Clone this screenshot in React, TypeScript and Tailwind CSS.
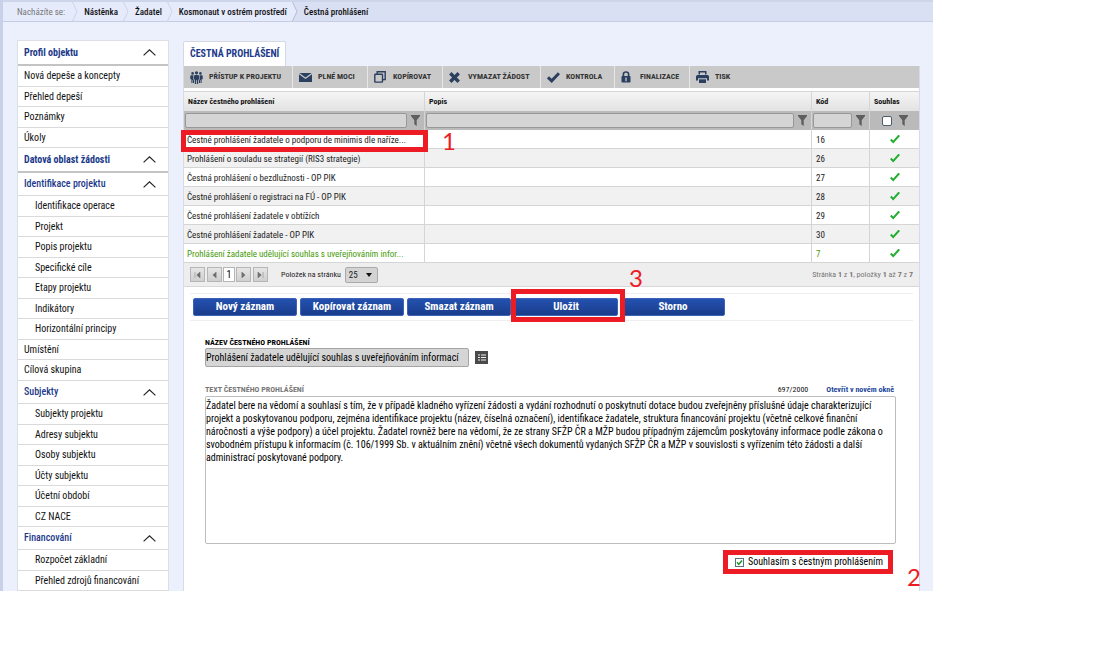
import { useState } from 'react';
import clsx from 'clsx';

const crumbs = ['Nástěnka', 'Žadatel', 'Kosmonaut v ostrém prostředí'];

type MenuItem = { label: string; sub?: boolean };
type MenuGroup = { title: string; main?: boolean; items: MenuItem[] };

const menu: MenuGroup[] = [
    {
        title: 'Profil objektu',
        main: true,
        items: [{ label: 'Nová depeše a koncepty' }, { label: 'Přehled depeší' }, { label: 'Poznámky' }, { label: 'Úkoly' }],
    },
    { title: 'Datová oblast žádosti', main: true, items: [] },
    {
        title: 'Identifikace projektu',
        items: [
            { label: 'Identifikace operace', sub: true },
            { label: 'Projekt', sub: true },
            { label: 'Popis projektu', sub: true },
            { label: 'Specifické cíle', sub: true },
            { label: 'Etapy projektu', sub: true },
            { label: 'Indikátory', sub: true },
            { label: 'Horizontální principy', sub: true },
            { label: 'Umístění' },
            { label: 'Cílová skupina' },
        ],
    },
    {
        title: 'Subjekty',
        items: [
            { label: 'Subjekty projektu', sub: true },
            { label: 'Adresy subjektu', sub: true },
            { label: 'Osoby subjektu', sub: true },
            { label: 'Účty subjektu', sub: true },
            { label: 'Účetní období', sub: true },
            { label: 'CZ NACE', sub: true },
        ],
    },
    {
        title: 'Financování',
        items: [
            { label: 'Rozpočet základní', sub: true },
            { label: 'Přehled zdrojů financování', sub: true },
        ],
    },
];

const rows = [
    { name: 'Čestné prohlášení žadatele o podporu de minimis dle naříze...', code: 16 },
    { name: 'Prohlášení o souladu se strategií (RIS3 strategie)', code: 26 },
    { name: 'Čestná prohlášení o bezdlužnosti - OP PIK', code: 27 },
    { name: 'Čestné prohlášení o registraci na FÚ - OP PIK', code: 28 },
    { name: 'Čestné prohlášení žadatele v obtížích', code: 29 },
    { name: 'Čestné prohlášení žadatele - OP PIK', code: 30 },
    { name: 'Prohlášení žadatele udělující souhlas s uveřejňováním infor...', code: 7 },
];

const declaration =
    'Žadatel bere na vědomí a souhlasí s tím, že v případě kladného vyřízení žádosti a vydání rozhodnutí o poskytnutí dotace budou zveřejněny příslušné údaje charakterizující projekt a poskytovanou podporu, zejména identifikace projektu (název, číselná označení), identifikace žadatele, struktura financování projektu (včetně celkové finanční náročnosti a výše podpory) a účel projektu. Žadatel rovněž bere na vědomí, že ze strany SFŽP ČR a MŽP budou případným zájemcům poskytovány informace podle zákona o svobodném přístupu k informacím (č. 106/1999 Sb. v aktuálním znění) včetně všech dokumentů vydaných SFŽP ČR a MŽP v souvislosti s vyřízením této žádosti a další administrací poskytované podpory.';

const PeopleIcon = () => (
    <svg width="13" height="13" viewBox="0 0 13 13" fill="#2b3f5f">
        <circle cx="6.5" cy="1.8" r="1.6" />
        <circle cx="2.6" cy="2.4" r="1.3" />
        <circle cx="10.4" cy="2.4" r="1.3" />
        <path d="M4.6 3.9h3.8l.6 1v3.6H8.2V13H6.9V9.300h-.8V13H4.800V8.500H4V4.900z" />
        <path d="M.9 4.200h2.500v4.200l.6.600v3H2.900V9h-.5v3h-1V8.200H.3V4.900zM12.100 4.200H9.600v4.200L9 9v3h1.100V9h.5v3h1V8.200h1.100V4.900z" />
    </svg>
);

const MailIcon = () => (
    <svg width="13" height="9" viewBox="0 0 13 9" fill="#2b3f5f">
        <path d="M.4 0h12.200L6.500 4.600z" />
        <path d="M0 1.200l6.500 4.900L13 1.200V9H0z" />
    </svg>
);

const CopyIcon = () => (
    <svg width="12" height="12" viewBox="0 0 12 12" fill="none" stroke="#2b3f5f" strokeWidth="1.4">
        <rect x=".8" y="3.2" width="7.700" height="7.900" rx=".6" />
        <path d="M3.200 3V.8h8v7.800H8.800" />
    </svg>
);

const CrossIcon = () => (
    <svg width="11" height="11" viewBox="0 0 11 11" fill="none" stroke="#2b3f5f" strokeWidth="3.4">
        <path d="M1.300 1.300l8.400 8.400M9.700 1.300L1.300 9.700" />
    </svg>
);

const CheckIcon = () => (
    <svg width="13" height="11" viewBox="0 0 13 11" fill="none" stroke="#2b3f5f" strokeWidth="3">
        <path d="M1 5.300l3.700 3.600L12 1.200" />
    </svg>
);

const LockIcon = () => (
    <svg width="10" height="12" viewBox="0 0 10 12">
        <path d="M2.400 5.500V3.300a2.600 2.300 0 0 1 5.200 0v2.200" fill="none" stroke="#2b3f5f" strokeWidth="1.700" />
        <rect x=".5" y="5" width="9" height="6.600" rx=".8" fill="#2b3f5f" />
        <path d="M5 6.600v3.600" stroke="#d4d8df" strokeWidth="1.200" />
    </svg>
);

const PrintIcon = () => (
    <svg width="13" height="12" viewBox="0 0 13 12" fill="#2b3f5f">
        <path d="M2.500 0h8v3.500H9V1.400H4v2.100H2.500z" />
        <path d="M1.200 3.900h10.600L13 5v4.500h-2V7.200H2v2.300H0V5z" />
        <path d="M3 8.300h7V12H3z" />
    </svg>
);

const toolbar = [
    { label: 'PŘÍSTUP K PROJEKTU', Icon: PeopleIcon, width: 'w-[109px]' },
    { label: 'PLNÉ MOCI', Icon: MailIcon, width: 'w-[75px]' },
    { label: 'KOPÍROVAT', Icon: CopyIcon, width: 'w-[75px]' },
    { label: 'VYMAZAT ŽÁDOST', Icon: CrossIcon, width: 'w-[98px]' },
    { label: 'KONTROLA', Icon: CheckIcon, width: 'w-[74px]' },
    { label: 'FINALIZACE', Icon: LockIcon, width: 'w-[75px]' },
    { label: 'TISK', Icon: PrintIcon, width: 'w-[60px]' },
];

const FilterIcon = () => (
    <svg width="9" height="11" viewBox="0 0 9 11" fill="#5e5e5e" className="shrink-0">
        <path d="M0 0h9v1L5.700 5.200V11L3.300 9.300V5.200L0 1z" />
    </svg>
);

const Chevron = () => (
    <svg width="13" height="7" viewBox="0 0 13 7" fill="none" stroke="#222" strokeWidth="1.200">
        <path d="M.6 6.400l5.900-5.500 5.900 5.500" />
    </svg>
);

const CrumbArrow = ({ last }: { last?: boolean }) => (
    <svg width="6" height="19" viewBox="0 0 6 19" className="shrink-0">
        {last && <path d="M0 0h6v19H0l5-9.500z" fill="#d9e0f4" />}
        <path d="M.5 0l4.500 9.500L.5 19" fill="none" stroke={last ? '#b4bdd6' : '#ccd3e6'} />
    </svg>
);

const GreenTick = () => (
    <svg width="10" height="9" viewBox="0 0 10 9" className="mx-auto" fill="none" stroke="#1fae2b" strokeWidth="2">
        <path d="M.8 4.500l2.400 2.600L9.200.3" />
    </svg>
);

const pagerShapes = [
    { label: 'První', d: 'M1 0v7M7 0L3 3.500 7 7z' },
    { label: 'Předchozí', d: 'M6 0L2 3.500 6 7z' },
    { label: 'Další', d: 'M2 0l4 3.500L2 7z' },
    { label: 'Poslední', d: 'M7 0v7M1 0l4 3.500L1 7z' },
];

const PagerButton = ({ index }: { index: number }) => (
    <button
        type="button"
        aria-label={pagerShapes[index].label}
        className="flex h-[15px] w-[15px] items-center justify-center border border-[#b5b5b5] bg-linear-to-b from-[#e6e6e6] to-[#cfcfcf]"
    >
        <svg width="7" height="6" viewBox="0 0 8 7" fill="#6e6e6e" stroke="#6e6e6e" strokeWidth=".5">
            <path d={pagerShapes[index].d} />
        </svg>
    </button>
);

const ActionButton = ({ label }: { label: string }) => (
    <button
        type="button"
        className="block h-[18px] w-[104px] rounded-[2px] border border-[#3c63b8] bg-linear-to-b from-[#2451b0] to-[#1a3d8c] text-[11px] leading-4 font-bold text-white"
    >
        {label}
    </button>
);

const filterInput = 'h-[15px] min-w-0 flex-1 rounded-[2px] border border-[#989898] bg-[#d5d5d5]';

export default function App() {
    const [agree, setAgree] = useState(true);
    const [text, setText] = useState(declaration);

    return (
        <div className="pr-[175px] font-['Roboto_Condensed','Liberation_Sans_Narrow',Roboto,sans-serif] text-[10px] leading-4 text-[#111]">
            <div className="border-l-[3px] border-[#c8d0ea] bg-[#ecf0fd]">
                {/* Breadcrumbs */}
                <nav className="flex h-[22px] items-stretch border-t-2 border-b border-t-[#cdd5ea] border-b-[#c6cde2] bg-[#e6ebfc] text-[9px]">
                    <span className="flex items-center pr-[7px] pl-[14px] text-[#777]">Nacházíte se:</span>
                    {crumbs.map((crumb) => (
                        <div key={crumb} className="flex">
                            <CrumbArrow />
                            <a href="#" className="flex items-center pr-[5px] pl-[6px] font-medium">
                                {crumb}
                            </a>
                        </div>
                    ))}
                    <CrumbArrow last />
                    <span className="flex flex-1 items-center bg-[#d9e0f4] pl-[6px] font-medium">Čestná prohlášení</span>
                </nav>

                <div className="flex gap-[14px] pt-[19px] pr-[13px] pl-[14px]">
                    {/* Side menu */}
                    <aside className="w-[152px] shrink-0 border-x border-[#dcdfe6] bg-white shadow-[0_-1px_0_#dcdfe6]">
                        {menu.map((group) => (
                            <section key={group.title}>
                                <button
                                    type="button"
                                    className={clsx(
                                        'flex w-full items-center justify-between pr-3 pl-[6px] text-left text-[#1c3a8a]',
                                        group.main ? 'h-[25px] border-b-2 border-[#c4c4c4] font-bold' : 'h-[23px] border-b border-[#dadada] font-medium'
                                    )}
                                >
                                    {group.title}
                                    <Chevron />
                                </button>
                                <ul>
                                    {group.items.map((item) => (
                                        <li key={item.label} className="h-[21px] border-b border-[#dadada] even:h-5">
                                            <a href="#" className={clsx('flex h-full items-center', item.sub ? 'pl-[17px]' : 'pl-[6px]')}>
                                                {item.label}
                                            </a>
                                        </li>
                                    ))}
                                </ul>
                            </section>
                        ))}
                    </aside>

                    <main className="flex min-w-0 flex-1 flex-col">
                        <div className="flex">
                            <h1 className="h-[25px] rounded-t-[2px] border border-b-0 border-[#d4d8e2] bg-white px-[6px] text-[10px] leading-6 font-bold text-[#1c3a8a]">
                                ČESTNÁ PROHLÁŠENÍ
                            </h1>
                        </div>

                        <div className="flex-1 border-r border-l border-[#d8dbe3] bg-white">
                            {/* Toolbar */}
                            <div className="mb-[3px] flex h-[22px] bg-[#c9c9c9]">
                                {toolbar.map(({ label, Icon, width }, i) => (
                                    <button
                                        key={label}
                                        type="button"
                                        className={clsx(
                                            'flex items-center gap-[6px] pl-[6px] text-[8px] font-bold whitespace-nowrap text-[#333]',
                                            width,
                                            i < toolbar.length - 1 && 'border-r border-[#e6e6e6]'
                                        )}
                                    >
                                        <span className="w-[13px]">
                                            <Icon />
                                        </span>
                                        {label}
                                    </button>
                                ))}
                            </div>

                            {/* Declarations grid */}
                            <table className="w-full table-fixed border-separate border-spacing-0 text-[#222]">
                                <colgroup>
                                    <col className="w-[241px]" />
                                    <col />
                                    <col className="w-[58px]" />
                                    <col className="w-[49px]" />
                                </colgroup>
                                <thead>
                                    <tr className="h-5 bg-linear-to-b from-[#f6f6f6] to-[#e2e2e2] text-left text-[8px] text-[#111]">
                                        {['Název čestného prohlášení', 'Popis', 'Kód', 'Souhlas'].map((head) => (
                                            <th key={head} className="border-t border-r border-[#d5d5d5] px-1 py-0 font-bold last:border-r-0">
                                                {head}
                                            </th>
                                        ))}
                                    </tr>
                                    <tr className="h-[19px] bg-[#bababa]">
                                        {['Název', 'Popis', 'Kód'].map((field) => (
                                            <td key={field} className="border-r border-[#d5d5d5] p-0">
                                                <div className="flex items-center gap-1 pr-1 pl-px">
                                                    <input type="text" aria-label={`Filtr ${field}`} className={filterInput} />
                                                    <FilterIcon />
                                                </div>
                                            </td>
                                        ))}
                                        <td className="p-0">
                                            <div className="flex items-center justify-center gap-[7px]">
                                                <input
                                                    type="checkbox"
                                                    aria-label="Filtr Souhlas"
                                                    className="h-[10px] w-[10px] appearance-none rounded-[2px] border border-[#4d5d68] bg-white"
                                                />
                                                <FilterIcon />
                                            </div>
                                        </td>
                                    </tr>
                                </thead>
                                <tbody>
                                    {rows.map((row, i) => (
                                        <tr key={row.code} className={clsx('h-[19px] even:bg-[#f1f1f1]', row.code === 7 && 'text-[#469a06]')}>
                                            <td className="relative border-r border-b border-[#d5d5d5] px-[3px] pt-[2px] pb-0 text-[9px] whitespace-nowrap">
                                                {row.name}
                                                {i === 0 && <div className="absolute top-0 -left-[3px] z-10 h-[22px] w-[247px] border-[5px] border-[#ed1c24]" />}
                                            </td>
                                            <td className="relative border-r border-b border-[#d5d5d5] p-0">
                                                {i === 0 && (
                                                    <span className="absolute -top-px left-[17px] font-[Lato,sans-serif] text-[24px] leading-6 text-[#ed1c24]">1</span>
                                                )}
                                            </td>
                                            <td className="border-r border-b border-[#d5d5d5] px-1 pt-[2px] pb-0 text-[9px]">{row.code}</td>
                                            <td className="border-b border-[#d5d5d5] p-0">
                                                <GreenTick />
                                            </td>
                                        </tr>
                                    ))}
                                </tbody>
                            </table>

                            {/* Pager */}
                            <div className="flex h-6 items-center justify-between border-b border-[#d8d8d8] bg-[#eee] px-[6px] text-[8px] text-[#777]">
                                <div className="flex items-center">
                                    <div className="mr-px flex gap-[2px]">
                                        <PagerButton index={0} />
                                        <PagerButton index={1} />
                                    </div>
                                    <span className="h-[15px] w-3 border border-[#b5b5b5] bg-white text-center text-[10px] leading-[13px] text-black">1</span>
                                    <div className="ml-px flex gap-[2px]">
                                        <PagerButton index={2} />
                                        <PagerButton index={3} />
                                    </div>
                                    <label htmlFor="page-size" className="pr-1 pl-[13px] text-[#222]">
                                        Položek na stránku
                                    </label>
                                    <div className="relative flex">
                                        <select
                                            id="page-size"
                                            className="h-4 w-[33px] appearance-none rounded-[2px] border border-[#aaa] bg-[#d3d3d3] pl-[3px] text-[9px] leading-[14px] text-[#222]"
                                        >
                                            <option>25</option>
                                        </select>
                                        <svg width="6" height="4" viewBox="0 0 6 4" className="pointer-events-none absolute top-[6px] right-[6px]">
                                            <path d="M0 0h6L3 4z" fill="#111" />
                                        </svg>
                                    </div>
                                </div>
                                <span>
                                    Stránka <b>1</b> z <b>1</b>, položky <b>1</b> až <b>7</b> z <b>7</b>
                                </span>
                            </div>

                            {/* Record actions */}
                            <div className="mx-[6px] mt-[6px] flex gap-[3px] border-y border-[#eee] px-[3px] py-1">
                                <ActionButton label="Nový záznam" />
                                <ActionButton label="Kopírovat záznam" />
                                <ActionButton label="Smazat záznam" />
                                <div className="relative">
                                    <ActionButton label="Uložit" />
                                    <div className="absolute -top-[9px] -left-[3px] z-10 h-[33px] w-[114px] border-[5px] border-[#ed1c24]" />
                                    <span className="absolute -top-8 left-[115px] font-[Lato,sans-serif] text-[24px] leading-6 text-[#ed1c24]">3</span>
                                </div>
                                <ActionButton label="Storno" />
                            </div>

                            {/* Record form */}
                            <form className="mr-[23px] ml-[21px] pt-[17px]">
                                <label htmlFor="name" className="block text-[8px] leading-[10px] font-bold text-black">
                                    NÁZEV ČESTNÉHO PROHLÁŠENÍ
                                </label>
                                <div className="flex items-center gap-[6px]">
                                    <input
                                        id="name"
                                        readOnly
                                        defaultValue="Prohlášení žadatele udělující souhlas s uveřejňováním informací"
                                        className="h-[19px] w-[264px] rounded-[2px] border border-[#a5a5a5] bg-[#d5d5d5] text-black"
                                    />
                                    <button type="button" aria-label="Vybrat" className="bg-[#4a4a4a]">
                                        <svg width="13" height="13" viewBox="0 0 13 13" stroke="#eee" strokeWidth="1.200">
                                            <path d="M3 4h2M3 6.500h2M3 9h2M6 4h5M6 6.500h5M6 9h5" />
                                        </svg>
                                    </button>
                                </div>

                                <div className="mt-[17px] flex items-end text-[8px] leading-[12px]">
                                    <label htmlFor="declaration" className="flex-1 font-bold text-[#777]">
                                        TEXT ČESTNÉHO PROHLÁŠENÍ
                                    </label>
                                    <span className="mr-[18px]">697/2000</span>
                                    <a href="#" className="mr-[2px] font-bold text-[#1f4a9b]">
                                        Otevřít v novém okně
                                    </a>
                                </div>
                                <textarea
                                    id="declaration"
                                    value={text}
                                    onChange={(e) => setText(e.target.value)}
                                    className="block h-[148px] w-full resize-none rounded-[2px] border border-[#bdbdbd] px-0 py-[2px] text-[10px] leading-[13px] text-black"
                                />
                                <div className="mt-[6px] mr-[3px] flex justify-end">
                                    <div className="relative">
                                        <label className="flex h-6 w-[170px] items-center gap-1 border-[5px] border-[#ed1c24] pl-[7px] whitespace-nowrap text-black">
                                            <span className="relative flex">
                                                <input
                                                    type="checkbox"
                                                    checked={agree}
                                                    onChange={(e) => setAgree(e.target.checked)}
                                                    className="h-[9px] w-[9px] appearance-none border border-[#55707f] bg-white"
                                                />
                                                {agree && (
                                                    <svg width="9" height="9" viewBox="0 0 9 9" className="pointer-events-none absolute inset-0" fill="none" stroke="#1e9a2b" strokeWidth="1.500">
                                                        <path d="M2 4.300l1.800 2L7 2.500" />
                                                    </svg>
                                                )}
                                            </span>
                                            Souhlasím s čestným prohlášením
                                        </label>
                                        <span className="absolute top-[15px] left-[184px] font-[Lato,sans-serif] text-[24px] leading-6 text-[#ed1c24]">2</span>
                                    </div>
                                </div>
                            </form>
                        </div>
                    </main>
                </div>
            </div>
        </div>
    );
}
